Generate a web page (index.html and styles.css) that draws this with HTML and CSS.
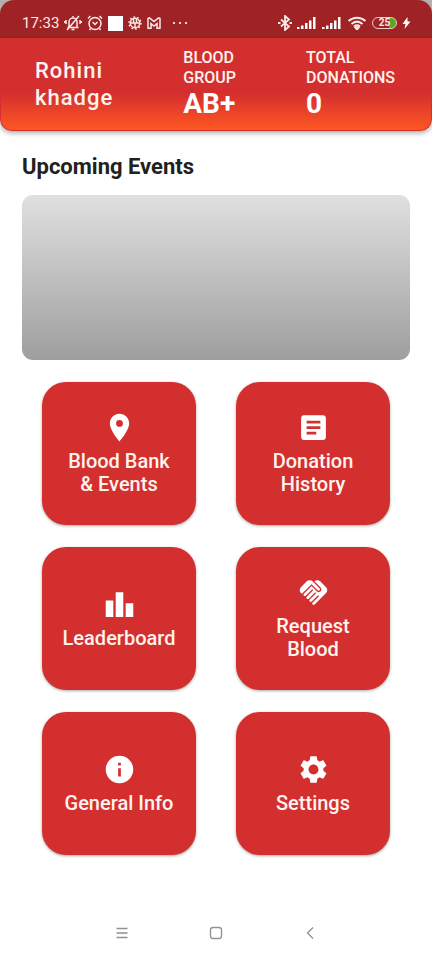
FILE: index.html
```html
<!DOCTYPE html>
<html lang="en">
<head>
<meta charset="utf-8">
<meta name="viewport" content="width=device-width, initial-scale=1">
<title>Blood Donation</title>
<link rel="stylesheet" href="styles.css">
</head>
<body>
<div class="status-wrap">
  <div class="status">
    <div class="status-group">
      <span class="time">17:33</span>
      <svg width="18" height="16" viewBox="0 0 18 16" class="line"><path d="M5 12V7a4 4 0 0 1 8 0v5M3.500 12.500h11M9 2V1M7.500 14.500h3M3 15 15 1M2 5v4M16 5v4M.5 6v2M17.500 6v2"/></svg>
      <svg width="16" height="16" viewBox="0 0 16 16" class="line"><circle cx="8" cy="8.500" r="6"/><path d="M5.500 7 8 9.500 10.500 7M1 3.500 3.500 1M15 3.500 12.500 1M3.500 13.500 2.500 15M12.500 13.500l1 1.500"/></svg>
      <svg width="15" height="15" viewBox="0 0 15 15" class="fill"><path d="M0 0h15v15H0z"/></svg>
      <svg width="14" height="14" viewBox="0 0 14 14" class="line"><circle cx="7" cy="7" r="4.700"/><circle cx="7" cy="7" r="6" stroke-dasharray="1.700 2.012"/><path d="M2.500 7h9M5.500 2.500v4M8.500 2.500v4M7 7v4.500"/></svg>
      <svg width="14" height="14" viewBox="0 0 14 14" class="line"><path d="M1 2.500 2.500 1.800 7 5.500l4.500-3.700 1.500.7V12.300h-3V7.500L7 10 4 7.500v4.800H1z"/></svg>
      <svg width="16" height="14" viewBox="0 0 16 14" class="fill dots"><circle cx="2" cy="7" r="1.100"/><circle cx="8" cy="7" r="1.100"/><circle cx="14" cy="7" r="1.100"/></svg>
    </div>
    <div class="status-group">
      <svg width="14" height="16" viewBox="0 0 14 16" class="line thick"><path d="m3 4.500 8 7L7 15V1l4 3.500-8 7"/><path d="M0 8h2.500M11.500 8H14"/></svg>
      <svg width="20" height="14" viewBox="0 0 20 14" class="fill"><path d="M0 11h2.500v2H0zM4 9.500h2.500V13H4zM8 7h2.500v6H8zM12 4.500h2.500V13H12zM16 1h2.500v12H16z"/></svg>
      <svg width="20" height="14" viewBox="0 0 20 14" class="fill"><path d="M0 11h2.500v2H0zM4 9.500h2.500V13H4zM8 7h2.500v6H8zM12 4.500h2.500V13H12zM16 1h2.500v12H16z"/></svg>
      <svg width="20" height="14" viewBox="0 0 20 14" class="line wifi"><path d="M1.500 5c5-4.500 12-4.500 17 0M4.500 8c3.500-3 7.500-3 11 0M7 10.500c2-1.500 4-1.500 6 0"/><path d="M8.500 11.500h3L10 13.500z"/></svg>
      <span class="battery">25</span>
      <svg width="9" height="14" viewBox="0 0 9 14" class="fill"><path d="M5.500 1 .5 8h3l-1 5 6-7.500h-3z"/></svg>
    </div>
  </div>
</div>

<header class="header">
  <h1 class="name">Rohini khadge</h1>
  <div class="stat"><span class="stat-label">BLOOD GROUP</span><strong class="stat-value">AB+</strong></div>
  <div class="stat"><span class="stat-label">TOTAL DONATIONS</span><strong class="stat-value">0</strong></div>
</header>

<main class="main">
  <h2 class="title">Upcoming Events</h2>
  <div class="event"></div>
  <div class="tiles">
    <button class="tile" type="button">
      <svg class="icon" viewBox="0 0 24 24"><path d="M12 2C8.130 2 5 5.130 5 9c0 5.250 7 13 7 13s7-7.750 7-13c0-3.870-3.130-7-7-7zm0 9.500a2.500 2.500 0 0 1 0-5 2.500 2.500 0 0 1 0 5z"/></svg>
      <span>Blood Bank<br>&amp; Events</span>
    </button>
    <button class="tile" type="button">
      <svg class="icon" viewBox="0 0 24 24"><path d="M19 3H5c-1.100 0-2 .9-2 2v14c0 1.100.9 2 2 2h14c1.100 0 2-.9 2-2V5c0-1.100-.9-2-2-2zm-5 14H7v-2h7v2zm3-4H7v-2h10v2zm0-4H7V7h10v2z"/></svg>
      <span>Donation<br>History</span>
    </button>
    <button class="tile" type="button">
      <svg class="icon" viewBox="0 0 24 24"><path d="M7.500 21H2V9h5.500v12zm7.250-18h-5.500v18h5.500V3zM22 11h-5.500v10H22V11z"/></svg>
      <span>Leaderboard</span>
    </button>
    <button class="tile" type="button">
      <svg class="icon" viewBox="0 0 24 24"><path d="M16.480 10.410c-.39.39-1.040.39-1.430 0l-4.470-4.460-7.050 7.040-.66-.63c-1.170-1.170-1.170-3.070 0-4.240l4.240-4.240c1.170-1.170 3.070-1.170 4.240 0L16.480 9c.39.39.39 1.020 0 1.410zm.7-2.120c.78.78.78 2.050 0 2.830-1.270 1.270-2.610.22-2.830 0l-3.760-3.760-5.570 5.570c-.39.39-.39 1.020 0 1.410.39.39 1.020.39 1.420 0l4.620-4.620.71.71-4.620 4.620c-.39.39-.39 1.020 0 1.410.39.39 1.020.39 1.420 0l4.620-4.620.71.71-4.620 4.620c-.39.39-.39 1.020 0 1.410.39.39 1.020.39 1.410 0l4.620-4.620.71.71-4.620 4.620c-.39.39-.39 1.020 0 1.410.39.39 1.020.39 1.410 0l8.320-8.340c1.170-1.170 1.170-3.070 0-4.240l-4.240-4.240c-1.150-1.150-3.010-1.170-4.180-.06l4.470 4.470z"/></svg>
      <span>Request<br>Blood</span>
    </button>
    <button class="tile" type="button">
      <svg class="icon" viewBox="0 0 24 24"><path d="M12 2C6.480 2 2 6.480 2 12s4.480 10 10 10 10-4.480 10-10S17.520 2 12 2zm1 15h-2v-6h2v6zm0-8h-2V7h2v2z"/></svg>
      <span>General Info</span>
    </button>
    <button class="tile" type="button">
      <svg class="icon" viewBox="0 0 24 24"><path d="M19.140 12.940c.04-.3.060-.61.060-.94 0-.32-.02-.64-.07-.94l2.030-1.580c.18-.14.230-.41.120-.61l-1.920-3.320c-.12-.22-.37-.29-.59-.22l-2.390.96c-.5-.38-1.030-.7-1.620-.94l-.36-2.540c-.04-.24-.24-.41-.48-.41h-3.840c-.24 0-.43.17-.47.41l-.36 2.540c-.59.24-1.130.57-1.620.94l-2.390-.96c-.22-.08-.47 0-.59.22L2.740 8.870c-.12.21-.08.47.12.61l2.030 1.580c-.05.3-.09.63-.09.94s.02.64.07.94l-2.030 1.580c-.18.14-.23.41-.12.61l1.920 3.320c.12.22.37.29.59.22l2.390-.96c.5.38 1.030.7 1.620.94l.36 2.540c.05.24.24.41.48.41h3.840c.24 0 .44-.17.47-.41l.36-2.540c.59-.24 1.130-.56 1.620-.94l2.390.96c.22.08.47 0 .59-.22l1.920-3.320c.12-.22.070-.47-.12-.61l-2.010-1.580zM12 15.600c-1.980 0-3.600-1.620-3.600-3.600s1.620-3.600 3.600-3.600 3.600 1.620 3.600 3.600-1.620 3.600-3.600 3.600z"/></svg>
      <span>Settings</span>
    </button>
  </div>
</main>

<nav class="nav">
  <button type="button" aria-label="Recent apps"><svg viewBox="0 0 24 24"><path d="M6.500 7.500h11M6.500 12h11M6.500 16.500h11"/></svg></button>
  <button type="button" aria-label="Home"><svg viewBox="0 0 24 24"><rect x="6.500" y="6.500" width="11" height="11" rx="2.500"/></svg></button>
  <button type="button" aria-label="Back"><svg viewBox="0 0 24 24"><path d="m15 6.500-5.500 5.500 5.500 5.500"/></svg></button>
</nav>
</body>
</html>
```
FILE: styles.css
```css
* { box-sizing: border-box; }
body {
  margin: 0;
  min-height: 100vh;
  display: flex;
  flex-direction: column;
  background: #fff;
  color: #212121;
  font-family: Roboto, "Liberation Sans", sans-serif;
}
h1, h2 { margin: 0; }
svg { display: block; flex: none; }
button { padding: 0; border: 0; font: inherit; cursor: pointer; }

.status-wrap { background: #b5b0ae; }
.status {
  display: flex;
  justify-content: space-between;
  align-items: center;
  height: 38px;
  padding: 8px 21px 0 22px;
  background: #9f2325;
  border-radius: 14px 14px 0 0;
  color: #fbe9e7;
}
.status-group { display: flex; align-items: center; gap: 5px; }
.time { font-size: 15px; line-height: 18px; }
.line { fill: none; stroke: #fbe9e7; stroke-width: 1.5; }
.thick { stroke-width: 1.8; }
.wifi { stroke-width: 2; }
.fill { fill: #fff; }
.dots { margin-left: 6px; }
.battery {
  width: 25px;
  height: 12px;
  border: 1px solid #f3c9c5;
  border-radius: 6px;
  background: linear-gradient(to right, transparent 70%, #58a820 70%);
  font-size: 10px;
  font-weight: 700;
  line-height: 10px;
  text-align: center;
}

.header {
  display: flex;
  justify-content: space-between;
  align-items: center;
  min-height: 93px;
  padding: 0 36px 0 34px;
  background: linear-gradient(#d32f2f 60%, #ff5722);
  border: 1px solid #d32f2f;
  border-top: 0;
  border-radius: 0 0 12px 12px;
  box-shadow: 0 2px 5px rgba(0, 0, 0, .35);
  color: #fff3ee;
}
.name {
  width: min-content;
  font-size: 22px;
  font-weight: 500;
  line-height: 27px;
  letter-spacing: 1px;
}
.stat { display: flex; flex-direction: column; width: min-content; }
.stat-label { font-size: 16px; font-weight: 500; line-height: 20px; }
.stat-value { color: #fff; font-size: 28px; font-weight: 700; line-height: 32px; }

.main { padding: 20px 22px; }
.title { font-size: 22px; font-weight: 700; line-height: 32px; }
.event {
  height: 165px;
  margin-top: 12px;
  border-radius: 11px;
  background: linear-gradient(#e0e0e0, #9e9e9e);
}
.tiles {
  display: grid;
  grid-template-columns: 1fr 1fr;
  gap: 22px 40px;
  padding: 22px 20px 0;
}
.tile {
  display: flex;
  flex-direction: column;
  align-items: center;
  justify-content: center;
  gap: 6px;
  min-height: 143px;
  border-radius: 24px;
  background: #d32f2f;
  box-shadow: 0 1px 3px rgba(0, 0, 0, .35);
  color: #fff3ee;
  font-size: 20px;
  font-weight: 500;
  line-height: 23px;
}
.icon { width: 33px; height: 33px; fill: #fff; }

.nav {
  display: flex;
  justify-content: center;
  gap: 70px;
  margin-top: auto;
  padding-bottom: 15px;
}
.nav button { width: 24px; height: 24px; background: none; }
.nav svg { fill: none; stroke: #909090; stroke-width: 1.3; }
```
